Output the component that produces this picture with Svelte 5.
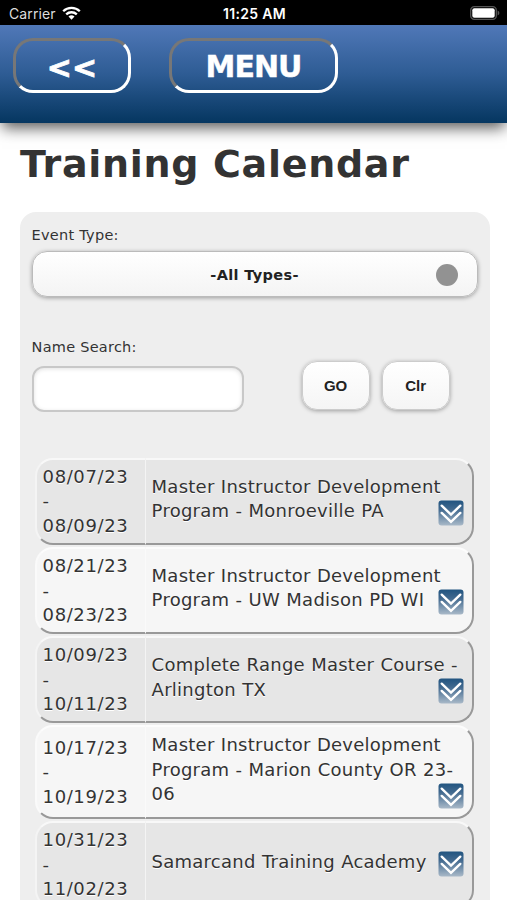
<script lang="ts">
    type Training = { from:string, to:string, title:string[] }

    let eventType = "-All Types-"
    let search = ""
    const events:Training[] = [
        { from: "08/07/23", to: "08/09/23", title: ["Master Instructor Development", "Program - Monroeville PA"] },
        { from: "08/21/23", to: "08/23/23", title: ["Master Instructor Development", "Program - UW Madison PD WI"] },
        { from: "10/09/23", to: "10/11/23", title: ["Complete Range Master Course -", "Arlington TX"] },
        { from: "10/17/23", to: "10/19/23", title: ["Master Instructor Development", "Program - Marion County OR 23-", "06"] },
        { from: "10/31/23", to: "11/02/23", title: ["Samarcand Training Academy"] },
    ]

    /** Empty the name search field */
    function clearSearch(){
        search = ""
    }
</script>

<div class="screen">
    <!-- Status bar -->
    <div class="status">
        <div class="carrier">
            <span>Carrier</span>
            <svg width="19" height="14" viewBox="0 0 19 14" fill="none" stroke="#fff" stroke-width="2.3">
                <path d="M1.2 5.2a11.8 11.8 0 0 1 16.6 0" />
                <path d="M4.2 8.4a7.6 7.6 0 0 1 10.6 0" />
                <path d="M9.5 13.7l-3-3.1a4.3 4.3 0 0 1 6 0z" fill="#fff" stroke="none" />
            </svg>
        </div>
        <span class="time">11:25 AM</span>
        <svg class="battery" width="30" height="14" viewBox="0 0 30 14">
            <rect x=".7" y=".7" width="25.6" height="12.6" rx="3.6" fill="none" stroke="#555" stroke-width="1.3" />
            <rect x="2.3" y="2.3" width="22.4" height="9.4" rx="2" fill="#fff" />
            <path d="M27.6 4.6q1.8.8 1.8 2.4t-1.8 2.4z" fill="#555" />
        </svg>
    </div>

    <header>
        <button class="nav back">&lt;&lt;</button>
        <button class="nav menu">MENU</button>
    </header>

    <h1>Training Calendar</h1>

    <main>
        <div class="label">Event Type:</div>
        <button class="select">
            <span>{eventType}</span>
            <i class="dot"></i>
        </button>

        <div class="label name">Name Search:</div>
        <div class="search">
            <input type="text" aria-label="Name Search" bind:value={search} />
            <button class="small">GO</button>
            <button class="small" on:click={clearSearch}>Clr</button>
        </div>

        <div class="events">
            {#each events as event}
                <div class="event">
                    <div class="dates">
                        <span>{event.from}</span>
                        <span>-</span>
                        <span>{event.to}</span>
                    </div>
                    <div class="details">
                        <div class="title">
                            {#each event.title as line}
                                <span>{line}</span>
                            {/each}
                            <svg class="expand" width="26" height="26" viewBox="0 0 26 26">
                                <defs>
                                    <linearGradient id="expandFill" x1="0" y1="0" x2="0" y2="1">
                                        <stop offset="0" stop-color="#215480" />
                                        <stop offset=".35" stop-color="#41698f" />
                                        <stop offset="1" stop-color="#a9b9c8" />
                                    </linearGradient>
                                </defs>
                                <rect x=".5" y=".5" width="25" height="25" rx="3" fill="url(#expandFill)" />
                                <path d="M3.7 5.7L13 14.6l9.3-8.9M3.7 12.9l9.3 9 9.3-9" fill="none" stroke="#fff" stroke-width="2.4" stroke-linecap="round" />
                            </svg>
                        </div>
                    </div>
                </div>
            {/each}
        </div>
    </main>
</div>

<style>
    :global(body){
        margin: 0;
        overflow: hidden;
    }
    .screen{
        width: 507px;
        height: 900px;
        overflow: hidden;
        background: #fff;
        color: #333;
        font-family: "DejaVu Sans", Verdana, sans-serif;
    }
    button{
        padding: 0;
        font-family: inherit;
        color: #222;
    }
    .status{
        box-sizing: border-box;
        height: 25px;
        padding: 1px 7px 0 9px;
        display: grid;
        grid-template-columns: 1fr auto 1fr;
        align-items: center;
        background: #000;
        color: #fff;
        font: 14px Inter, sans-serif;
    }
    .carrier{
        display: flex;
        align-items: center;
        gap: 6px;
        color: #ddd;
        letter-spacing: .1px;
    }
    .time{
        font-weight: 600;
        font-size: 14px;
        letter-spacing: .3px;
    }
    .battery{
        justify-self: end;
    }
    header{
        box-sizing: border-box;
        height: 98px;
        padding: 13px;
        display: flex;
        gap: 38px;
        background: linear-gradient(#5078b8, #2e5c94 50%, #053660);
        box-shadow: 0 7px 14px -2px rgba(0,0,0,.65);
    }
    .nav{
        box-sizing: border-box;
        height: 55px;
        border: 3px solid;
        border-color: #777 #fff #fff #777;
        border-radius: 20px;
        background: none;
        color: #fff;
        font-size: 30px;
        font-weight: bold;
    }
    .back{
        width: 118px;
        padding-top: 3px;
        -webkit-text-stroke: .8px #fff;
    }
    .menu{
        width: 169px;
        padding-top: 2px;
        letter-spacing: -1px;
        -webkit-text-stroke: .4px #fff;
    }
    h1{
        margin: 18px 0 25px 20px;
        font-size: 38px;
        line-height: 46px;
        letter-spacing: .7px;
        white-space: nowrap;
    }
    main{
        box-sizing: border-box;
        width: 470px;
        margin-left: 19.6px;
        padding: 13px 12px;
        border-radius: 16px 16px 0 0;
        background: #eee;
    }
    .label{
        font-size: 14.5px;
        line-height: 20px;
        letter-spacing: .25px;
    }
    .select{
        box-sizing: border-box;
        width: 446px;
        height: 46px;
        margin-top: 6px;
        padding: 2px 19px 0;
        display: grid;
        grid-template-columns: 22px 1fr 22px;
        align-items: center;
        border: 1px solid #bbb;
        border-radius: 15px;
        background: linear-gradient(#fff, #f4f4f4);
        box-shadow: 0 1px 4px rgba(0,0,0,.35);
        font-size: 14.5px;
        font-weight: bold;
        letter-spacing: .35px;
    }
    .select span{
        grid-column: 2;
    }
    .dot{
        width: 22px;
        height: 22px;
        border-radius: 50%;
        background: #929292;
    }
    .name{
        margin-top: 40px;
    }
    .search{
        height: 50px;
        margin-top: 4px;
        display: flex;
        align-items: center;
        gap: 12px;
    }
    input{
        box-sizing: border-box;
        width: 212px;
        height: 46px;
        margin: 5px 46px 0 0;
        padding: 0 10px;
        border: 2px solid #c8c8c8;
        border-radius: 12px;
        background: #fff;
        box-shadow: inset 0 1px 4px rgba(0,0,0,.12);
        font-size: 15px;
    }
    .small{
        box-sizing: border-box;
        width: 68px;
        height: 49px;
        margin-top: -1px;
        border: 1px solid #ccc;
        border-radius: 15px;
        background: linear-gradient(#fff, #f5f5f5);
        box-shadow: 0 1px 4px rgba(0,0,0,.35);
        font: bold 15px "Liberation Sans", sans-serif;
    }
    .events{
        margin: 46.5px 0 0 3px;
        width: 439px;
        display: flex;
        flex-direction: column;
        gap: 2px;
        font-size: 18px;
        line-height: 24.5px;
        text-shadow: 0 1px 0 #fff;
    }
    .event{
        display: grid;
        grid-template-columns: 110px 1fr;
        min-height: 87.3px;
    }
    .dates, .details{
        box-sizing: border-box;
        display: flex;
        flex-direction: column;
        justify-content: center;
        background: #e6e6e6;
        border: 2px solid;
        border-color: #f8f8f8 #999 #999 #f4f4f4;
    }
    .event:nth-child(even) > div{
        background: #f6f6f6;
        border-top-color: #fcfcfc;
        border-left-color: #fafafa;
    }
    .dates{
        padding: 1px 0 0 6px;
        border-right: none;
        border-radius: 18px 0 0 18px;
        letter-spacing: .6px;
    }
    .details{
        padding: 6px 6px 10px;
        border-left-width: 1px;
        border-radius: 0 18px 18px 0;
        letter-spacing: .25px;
        word-spacing: .3px;
    }
    .title{
        position: relative;
    }
    .dates span, .title span{
        display: block;
        white-space: nowrap;
    }
    .expand{
        position: absolute;
        right: 2px;
        bottom: -2px;
    }
</style>
